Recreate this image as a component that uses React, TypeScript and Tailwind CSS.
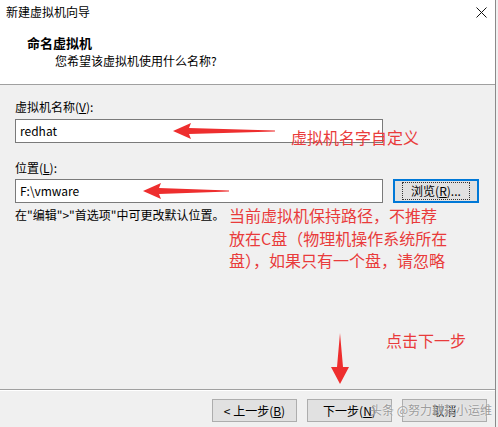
import React from "react";

const font = { fontFamily: '"Noto Sans CJK SC", "Noto Sans", sans-serif' };

function Btn({ children, focused, className = "" }: { children: React.ReactNode; focused?: boolean; className?: string }) {
    return (
        <div
            className={
                "h-[23px] flex items-center justify-center bg-[#e1e1e1] text-[12px] text-black " +
                (focused ? "border-2 border-[#0078d7] " : "border border-[#adadad] ") +
                className
            }
        >
            {children}
        </div>
    );
}

export default function App() {
    return (
        <main className="relative w-[498px] h-[427px] bg-[#f0f0f0] overflow-hidden text-black" style={font}>
            <div className="w-[496px] h-full border-r border-[#8a8a8a] flex flex-col">
                <header className="h-[85px] bg-white border-b border-[#a0a0a0] relative">
                    <p className="absolute left-[6px] top-[3px] text-[12px] leading-[18px]">新建虚拟机向导</p>
                    <svg className="absolute left-[476px] top-[7px]" width="11" height="11" viewBox="0 0 11 11">
                        <path d="M0.5 0.5 L10.5 10.5 M10.5 0.5 L0.5 10.5" stroke="#111" strokeWidth="1" />
                    </svg>
                    <h1 className="absolute left-[27px] top-[33px] text-[13px] leading-[20px] font-bold">命名虚拟机</h1>
                    <p className="absolute left-[55px] top-[52px] text-[12px] leading-[18px]">您希望该虚拟机使用什么名称?</p>
                </header>

                <section className="flex-1 px-[15px] pt-[13px] flex flex-col">
                    <label className="text-[12px] leading-[18px]">
                        虚拟机名称(<span className="underline">V</span>):
                    </label>
                    <div className="mt-[3px] w-[368px] h-[24px] bg-white border border-[#7a7a7a] flex items-center px-[4px] text-[12px]">
                        redhat
                    </div>
                    <label className="mt-[16px] text-[12px] leading-[18px]">
                        位置(<span className="underline">L</span>):
                    </label>
                    <div className="mt-[2px] flex gap-[10px]">
                        <div className="w-[368px] h-[24px] bg-white border border-[#7a7a7a] flex items-center px-[4px] text-[12px]">
                            F:\vmware
                        </div>
                        <Btn focused className="w-[86px] h-[24px]">
                            <span className="border border-dotted border-[#333] px-[8px] leading-[16px]">
                                浏览(<span className="underline">R</span>)...
                            </span>
                        </Btn>
                    </div>
                    <p className="mt-[3px] text-[12px] leading-[18px]">在"编辑"&gt;"首选项"中可更改默认位置。</p>
                </section>

                <footer className="h-[38px] border-t border-[#a0a0a0] shadow-[inset_0_1px_0_#ffffff] flex justify-end items-start pt-[9px] pr-[8px] gap-[10px]">
                    <Btn className="w-[85px]">
                        &lt; 上一步(<span className="underline">B</span>)
                    </Btn>
                    <Btn className="w-[85px]">
                        下一步(<span className="underline">N</span>)
                    </Btn>
                    <Btn className="w-[85px]">取消</Btn>
                </footer>
            </div>

            {/* annotations */}
            <svg className="absolute inset-0 pointer-events-none" width="498" height="427" viewBox="0 0 498 427">
                <polygon points="173,131 191,123 189,128 275,130.5 275,131.5 189,134 191,139" fill="#ee2e2e" />
                <polygon points="143,191 161,183 159,188 229,190.5 229,191.5 159,194 161,199" fill="#ee2e2e" />
                <polygon points="340,333 343,367 349,367 340,384 331,367 337,367" fill="#ee2e2e" />
            </svg>
            <p className="absolute left-[291px] top-[126px] text-[16px] leading-[22px] text-[#e93b3b]">虚拟机名字自定义</p>
            <div className="absolute left-[229px] top-[204px] text-[16px] leading-[22.5px] text-[#e93b3b]">
                <p>当前虚拟机保持路径，不推荐</p>
                <p>放在C盘（物理机操作系统所在</p>
                <p>盘），如果只有一个盘，请忽略</p>
            </div>
            <p className="absolute left-[386px] top-[329px] text-[16px] leading-[22px] text-[#e93b3b]">点击下一步</p>
            <p className="absolute left-[370px] top-[401px] whitespace-nowrap text-[12px] leading-[18px] text-[#9c9c9c] [text-shadow:0_0_2px_#ffffff]">
                头条 @努力耕耘小运维
            </p>
        </main>
    );
}
